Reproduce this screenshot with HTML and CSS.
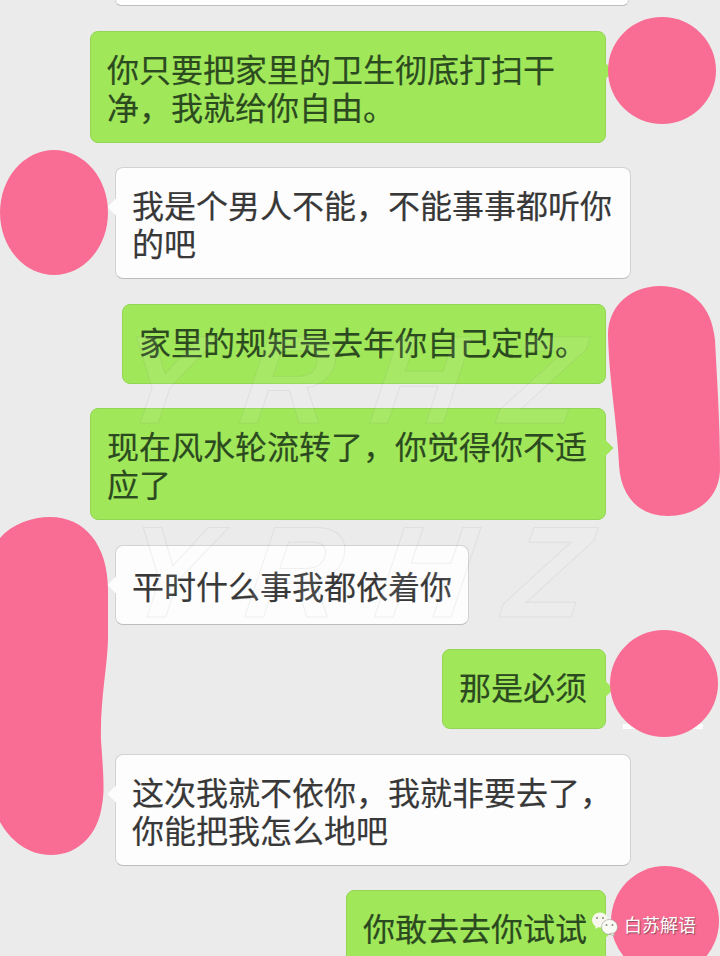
FILE: index.html
```html
<!DOCTYPE html>
<html lang="zh-CN">

<head>
    <meta charset="UTF-8">
    <meta name="viewport" content="width=device-width, initial-scale=1.0">
    <title>白苏解语</title>
    <link rel="stylesheet" href="styles.css">
</head>

<body>
    <main class="chat">
        <div class="bubble them cut"></div>
        <div class="bubble me tail">你只要把家里的卫生彻底打扫干净，我就给你自由。</div>
        <div class="bubble them tail">我是个男人不能，不能事事都听你的吧</div>
        <div class="bubble me short">家里的规矩是去年你自己定的。</div>
        <div class="bubble me tail">现在风水轮流转了，你觉得你不适应了</div>
        <div class="bubble them tail">平时什么事我都依着你</div>
        <div class="bubble me tail short">那是必须</div>
        <div class="bubble them tail">这次我就不依你，我就非要去了，你能把我怎么地吧</div>
        <div class="bubble me tail short">你敢去去你试试</div>

        <div class="mark mark-top"><span>Y</span><span>R</span><span>H</span><span>Z</span></div>
        <div class="mark mark-bottom"><span>Y</span><span>R</span><span>H</span><span>Z</span></div>

        <div class="patch"></div>
        <!-- manchas que tapan los avatares -->
        <svg class="blobs" width="720" height="956" viewBox="0 0 720 956">
            <ellipse cx="662" cy="70.500" rx="54" ry="53.500" />
            <ellipse cx="54" cy="212.500" rx="54" ry="62.500" />
            <path d="M660 286C690 286 712 305 715 340C717 380 720 420 720 470C719 500 695 516 668 516C640 516 621 498 619 465C618 430 609 380 608 335C608 305 632 286 660 286Z" />
            <path d="M0 538C12 524 32 517 50 517C85 517 108 545 108 590L108 640C107 670 100 700 101 740C103 770 105 790 102 805C98 835 78 855 51 855C28 855 10 840 0 822Z" />
            <ellipse cx="664" cy="683.500" rx="54" ry="53.500" />
            <ellipse cx="665" cy="921" rx="54" ry="55" />
        </svg>

        <div class="credit">
            <svg class="credit-icon" width="28" height="26" viewBox="0 0 28 26">
                <ellipse class="wx-back" cx="9" cy="9" rx="8" ry="7.500" />
                <path class="wx-back" d="M5 14L4 18L9 15Z" />
                <ellipse class="wx-front" cx="18.500" cy="16" rx="8" ry="7.500" />
                <path class="wx-front" d="M22 22L24 25L18 23Z" />
                <circle class="wx-eye" cx="6" cy="7" r="1" />
                <circle class="wx-eye" cx="12" cy="7" r="1" />
                <circle class="wx-eye" cx="15.500" cy="14" r="1" />
                <circle class="wx-eye" cx="21.500" cy="14" r="1" />
            </svg>
            <span class="credit-name">白苏解语</span>
        </div>
    </main>
</body>

</html>
```

FILE: styles.css
```css
html,
body {
    margin: 0;
    padding: 0;
}

.chat {
    position: relative;
    width: 720px;
    height: 956px;
    overflow: hidden;
    display: flex;
    flex-direction: column;
    gap: 24.5px;
    background-color: #ebebeb;
    font-family: "Noto Sans CJK SC", "Noto Sans", sans-serif;
    font-size: 32px;
    line-height: 38px;
}

.bubble {
    position: relative;
    flex: none;
    box-sizing: border-box;
    display: flex;
    align-items: center;
    min-height: 80px;
    max-width: 516px;
    padding: 17px 16px;
    border: 1px solid;
    border-radius: 8px;
    -webkit-text-stroke: 0.2px currentColor;
}

.me {
    align-self: flex-end;
    margin-right: 114px;
    padding-right: 18px;
    background-color: #a0e75a;
    border-color: #93d654;
    color: #2c4a20;
}

.short {
    padding-bottom: 23px;
}

.them {
    align-self: flex-start;
    margin-left: 115px;
    background-color: #fdfdfd;
    border-color: #d2d2d2;
    border-bottom-color: #bdbdbd;
    color: #383838;
}

.cut {
    height: 6px;
    min-height: 0;
    width: 514px;
    padding: 0;
    border-top: 0;
    border-radius: 0 0 8px 8px;
}

.tail::after {
    content: "";
    position: absolute;
    top: 33px;
    width: 12px;
    height: 12px;
    transform: rotate(45deg);
    background-color: inherit;
}

.me.tail::after {
    right: -6px;
}

.them.tail::after {
    left: -6px;
}

.mark {
    position: absolute;
    display: flex;
    font-family: "Liberation Sans", sans-serif;
    font-style: italic;
    font-weight: bold;
    line-height: 100px;
    color: rgba(255, 255, 255, 0.08);
    -webkit-text-stroke: 1px rgba(120, 120, 120, 0.1);
    transform: skewX(-8deg);
}

.mark-top {
    left: 120px;
    top: 330px;
    gap: 40px;
    font-size: 125px;
}

.mark-bottom {
    left: 126px;
    top: 522px;
    gap: 36px;
    font-size: 130px;
}

.patch {
    position: absolute;
    left: 623px;
    top: 724px;
    width: 80px;
    height: 5px;
    background-color: #ffffff;
}

.blobs {
    position: absolute;
    left: 0;
    top: 0;
    fill: #f96d94;
}

.credit {
    position: absolute;
    left: 591px;
    top: 911px;
    display: flex;
    align-items: center;
    gap: 5px;
}

.credit-name {
    font-size: 18px;
    line-height: 26px;
    color: #ffffff;
    text-shadow: 1px 1px 1px rgba(90, 60, 70, 0.7);
}

.wx-back {
    fill: #f7f7ee;
}

.wx-front {
    fill: #fbfbf6;
    stroke: #9a9a8e;
    stroke-width: 0.6;
}

.wx-eye {
    fill: #8b8b80;
}
```
